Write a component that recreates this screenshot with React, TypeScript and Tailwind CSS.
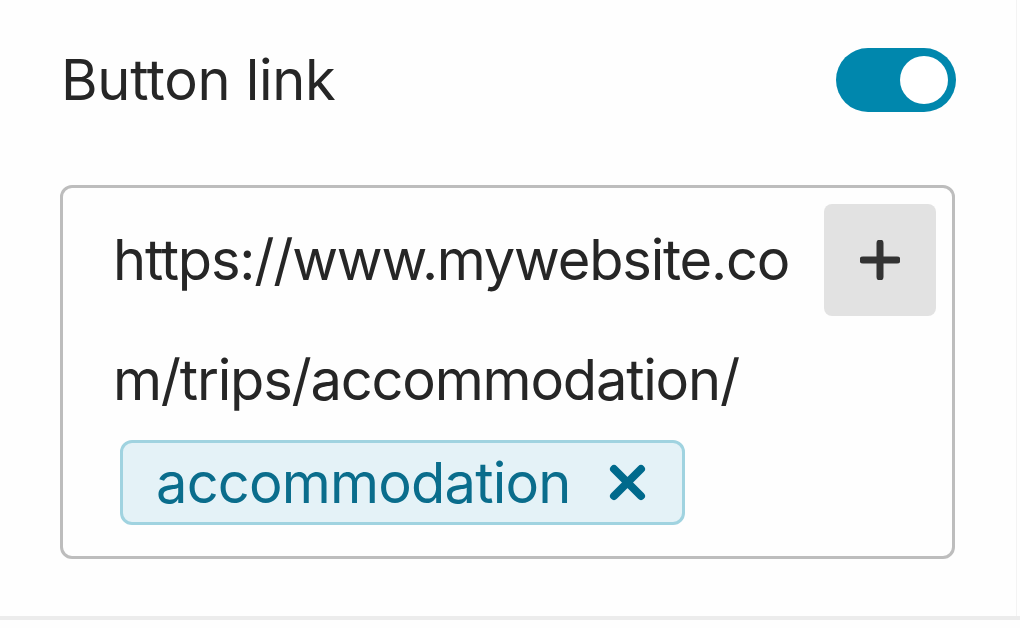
export default function App() {
  return (
    <div className="flex h-[628px] w-[1020px] flex-col overflow-hidden bg-[#fefefe] font-['Inter',sans-serif] tracking-[-0.8px] text-[#262626]">
      <div className="h-[616px] w-[1017px] border-r border-[#f3f3f3] pl-[60px] pt-[48px]">
        {/* header row */}
        <div className="flex h-[64px] w-[896px] items-center justify-between">
          <span className="pl-[1px] text-[56px] leading-none tracking-[-0.3px]">Button link</span>
          <div className="flex h-[64px] w-[120px] items-center justify-end rounded-full bg-[#0087ad] pr-[8px]">
            <div className="h-[48px] w-[48px] rounded-full bg-white" />
          </div>
        </div>

        {/* link input */}
        <div className="relative mt-[73px] w-[895px] rounded-[12px] border-[3px] border-[#bdbdbd] pb-[31px] pl-[50px] pr-[142px] pt-[12px]">
          <div className="break-all text-[56px] leading-[120px] tracking-[-1.2px] text-[#262626]">
            https://www.mywebsite.com/trips/accommodation/
          </div>
          <div className="ml-[7px] inline-flex h-[85px] items-center gap-[38px] rounded-[12px] border-[3px] border-[#a0d3e0] bg-[#e4f2f7] pl-[33px] pr-[36px] text-[56px] leading-none text-[#0a6d8c]">
            <span>accommodation</span>
            <svg width="37" height="37" viewBox="0 0 37 37" fill="none" stroke="#006a8c" strokeWidth="8" strokeLinecap="round">
              <path d="M5 5L32 32M32 5L5 32" />
            </svg>
          </div>
          <div className="absolute right-[16px] top-[16px] flex h-[112px] w-[112px] items-center justify-center rounded-[8px] bg-[#e2e2e2]">
            <svg width="40" height="40" viewBox="0 0 40 40" fill="none" stroke="#333333" strokeWidth="7" strokeLinecap="round">
              <path d="M20 3V37M3 20H37" />
            </svg>
          </div>
        </div>
      </div>
      <div className="h-[4px] w-full bg-[#ececec]" />
    </div>
  );
}
